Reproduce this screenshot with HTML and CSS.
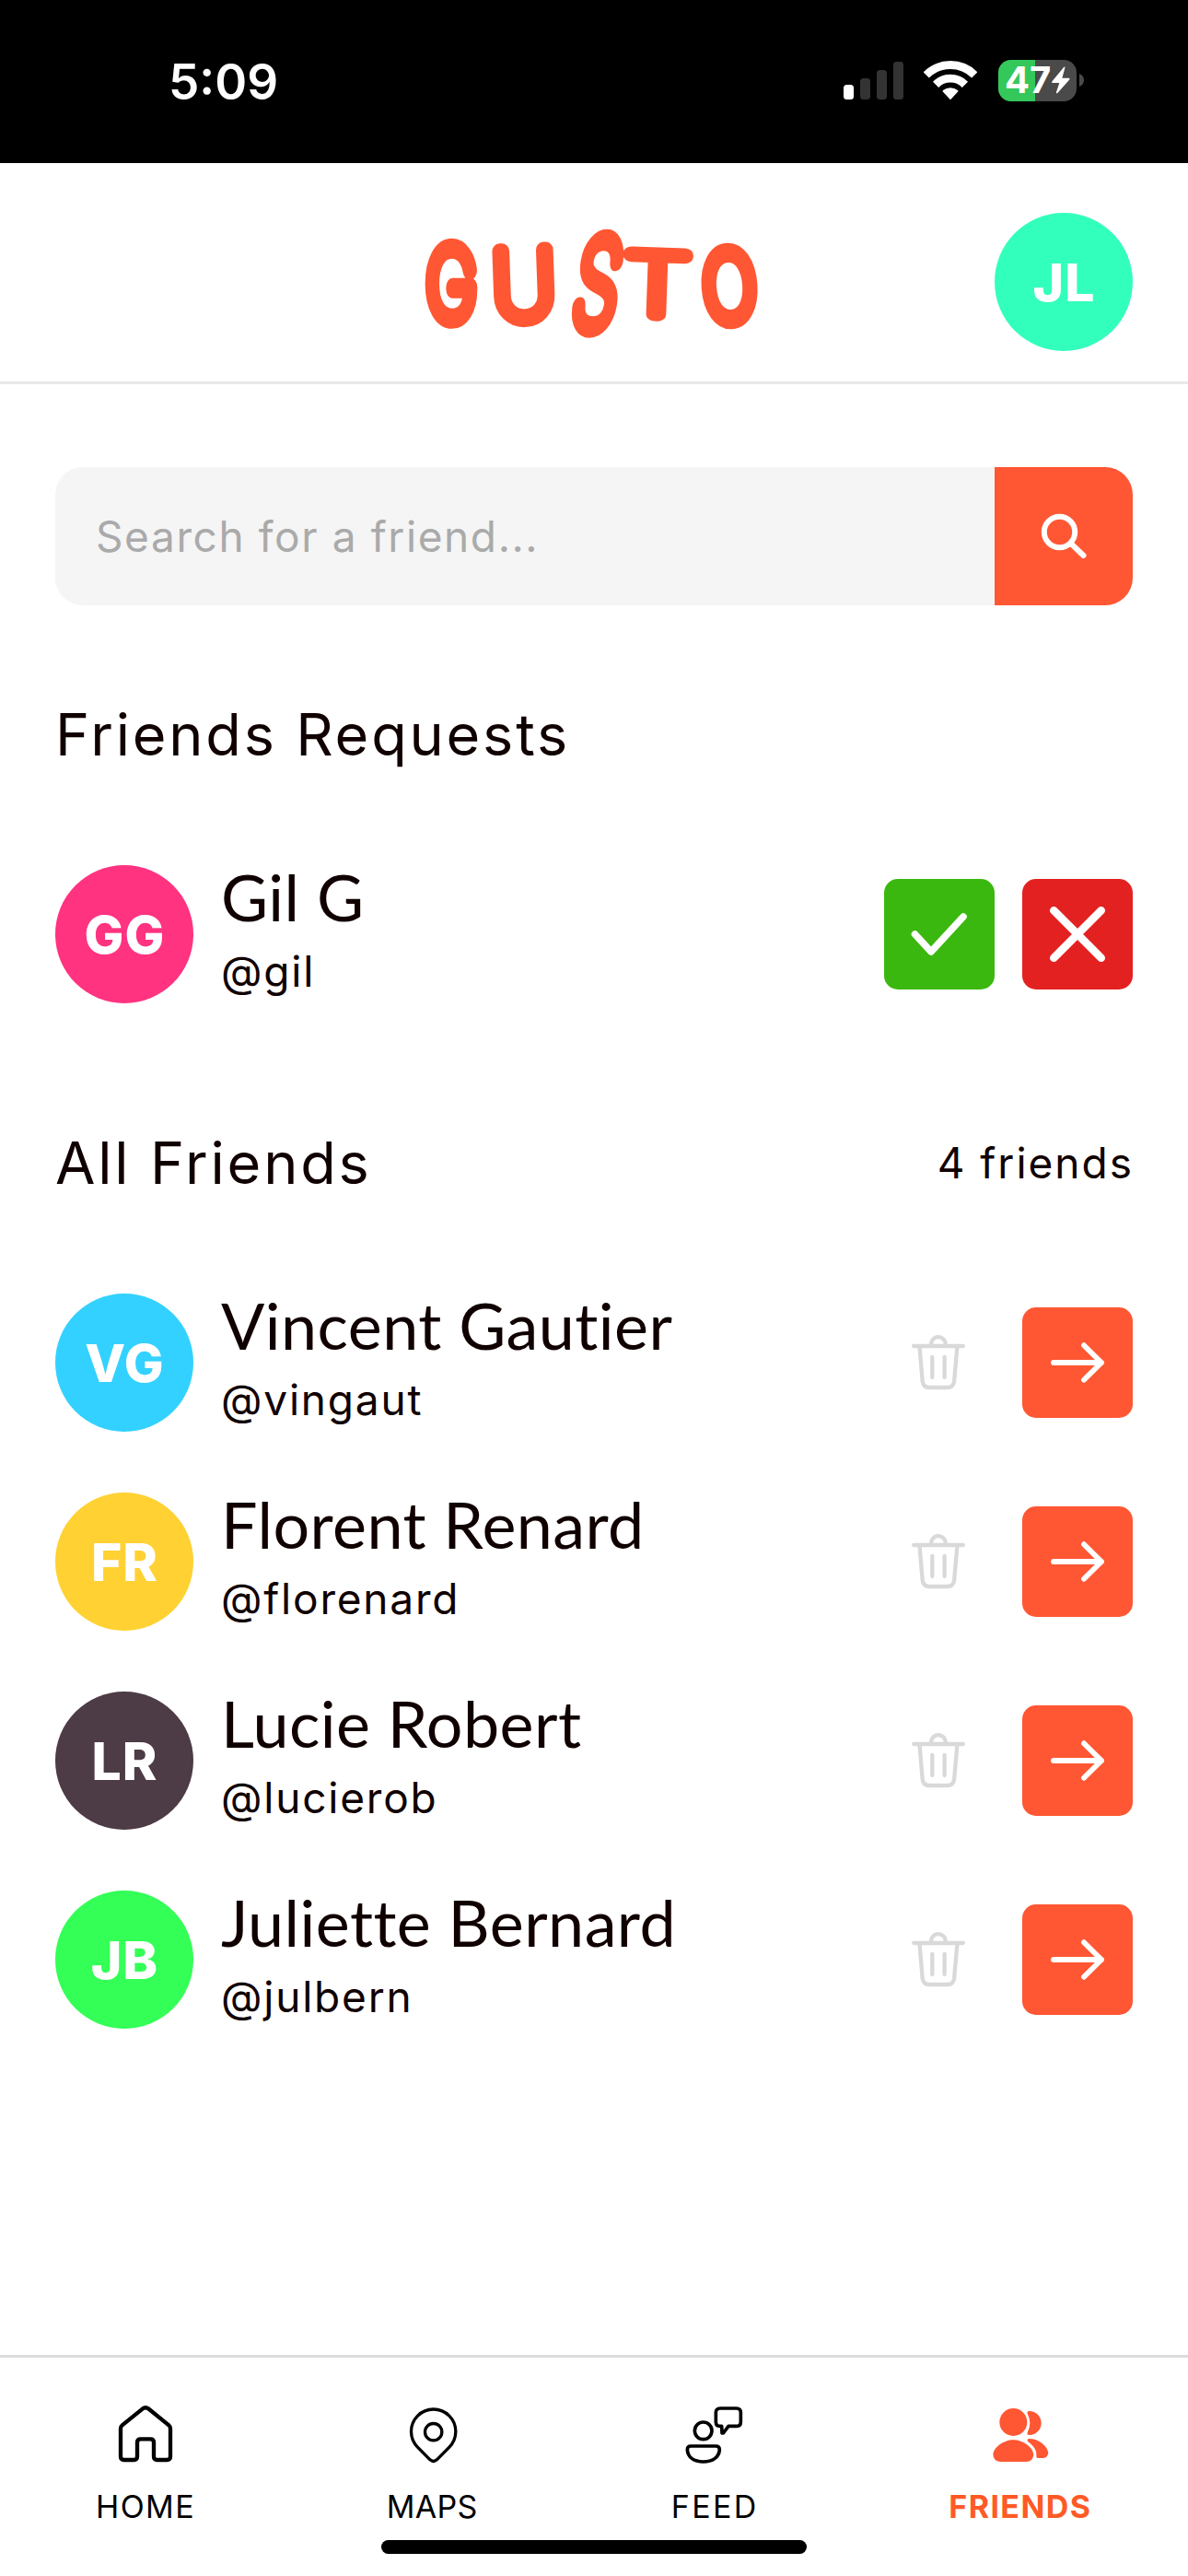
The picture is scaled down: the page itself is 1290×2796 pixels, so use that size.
FILE: index.html
```html
<!DOCTYPE html>
<html lang="en">
<head>
<meta charset="utf-8">
<title>Gusto – Friends</title>
<link rel="stylesheet" href="styles.css">
</head>
<body>
<svg class="defs" width="0" height="0" aria-hidden="true">
  <symbol id="trash" viewBox="58 67 62 64">
    <path d="M62.2 81H115.8M81 80v-1a7.9 7.9 0 0 1 15.8 0v1M68.5 82l3.2 37.2q.7 6.8 7.6 6.8h19.2q6.8 0 7.6-6.8L109.4 82M82.3 92.8V115M95.6 92.8V115" fill="none" stroke="#d9d9d9" stroke-width="4.3" stroke-linecap="round"/>
  </symbol>
  <symbol id="arrow" viewBox="0 0 120 120">
    <path d="M34 60H86M67 41.2L86 60L67 78.8" fill="none" stroke="#fff" stroke-width="5.8" stroke-linecap="round" stroke-linejoin="round"/>
  </symbol>
</svg>

<div class="screen">
  <div class="status">
    <span class="time">5:09</span>
    <div class="indicators">
      <svg class="signal" width="65" height="45" viewBox="916 64 65 45">
        <rect x="916" y="91" width="11" height="16" rx="3.5" fill="#fff"/>
        <rect x="934" y="84" width="11" height="23" rx="3.5" fill="#333"/>
        <rect x="952" y="75" width="11" height="32" rx="3.5" fill="#333"/>
        <rect x="970" y="66" width="11" height="41" rx="3.5" fill="#333"/>
      </svg>
      <svg class="wifi" width="58" height="45" viewBox="1003.5 64 58 45">
        <path d="M1006.2 80.4A37.2 37.2 0 0 1 1058.8 80.4M1016.6 90.8A22.5 22.5 0 0 1 1048.4 90.8" fill="none" stroke="#fff" stroke-width="8.8"/>
        <path d="M1032.5 107.2L1024.3 98.6Q1023.6 97.8 1024.5 97.1A13 13 0 0 1 1040.5 97.1Q1041.4 97.8 1040.7 98.6Z" fill="#fff"/>
      </svg>
      <div class="battery">
        <div class="level" style="width:47%"></div>
        <span class="percent">47</span>
        <svg class="bolt" width="20" height="30" viewBox="790 94 60 90"><path d="M830 96Q834 94 833 99L824 132H846Q851 133 847 138L809 181Q804 184 805 178L815 148H793Q788 147 792 142Z" fill="#fff"/></svg>
      </div>
      <svg class="nub" width="5" height="14" viewBox="0 0 5 14"><path d="M0 0Q5 2 5 7T0 14Z" fill="#4a4a4a"/></svg>
    </div>
  </div>

  <header class="header">
    <svg class="logo" width="368" height="132" viewBox="123 60 1104 396" role="img" aria-label="Gusto">
      <text transform="translate(211 378) scale(2.2 3.15)">G</text>
      <text transform="translate(450 376) rotate(-2) scale(2.85 3.02)">U</text>
      <text transform="translate(690 404) skewX(-9) translate(-24 0) scale(2.35 3.9)">S</text>
      <text transform="translate(877 364) rotate(2) scale(3.5 2.7)">T</text>
      <text transform="translate(1124 380) rotate(-4) scale(2.3 3)">O</text>
    </svg>
    <div class="avatar teal">JL</div>
  </header>

  <main class="content">
    <div class="search">
      <span class="placeholder">Search for a friend...</span>
      <div class="search-button">
        <svg width="150" height="150" viewBox="1080 507 150 150"><g fill="none" stroke="#fff" stroke-width="6" stroke-linecap="round"><circle cx="1150.5" cy="577.5" r="16.7"/><path d="M1162.6 589.6L1176.5 603"/></g></svg>
      </div>
    </div>

    <section class="section requests">
      <div class="section-head"><h2>Friends Requests</h2></div>
      <div class="rows">
        <div class="row">
          <div class="avatar pink">GG</div>
          <div class="person"><div class="name">Gil G</div><div class="handle">@gil</div></div>
          <div class="actions near">
            <div class="button accept"><svg width="120" height="120" viewBox="0 0 120 120"><path d="M33.5 60L51 79L86 41" fill="none" stroke="#fff" stroke-width="7.6" stroke-linecap="round" stroke-linejoin="round"/></svg></div>
            <div class="button decline"><svg width="120" height="120" viewBox="0 0 120 120"><path d="M34.3 34.3L85.7 85.7M85.7 34.3L34.3 85.7" fill="none" stroke="#fff" stroke-width="8.6" stroke-linecap="round"/></svg></div>
          </div>
        </div>
      </div>
    </section>

    <section class="section friends">
      <div class="section-head"><h2>All Friends</h2><span class="count">4 friends</span></div>
      <div class="rows">
        <div class="row">
          <div class="avatar blue">VG</div>
          <div class="person"><div class="name">Vincent Gautier</div><div class="handle">@vingaut</div></div>
          <div class="actions"><svg width="62" height="64"><use href="#trash"/></svg><div class="button"><svg width="120" height="120"><use href="#arrow"/></svg></div></div>
        </div>
        <div class="row">
          <div class="avatar yellow">FR</div>
          <div class="person"><div class="name">Florent Renard</div><div class="handle">@florenard</div></div>
          <div class="actions"><svg width="62" height="64"><use href="#trash"/></svg><div class="button"><svg width="120" height="120"><use href="#arrow"/></svg></div></div>
        </div>
        <div class="row">
          <div class="avatar plum">LR</div>
          <div class="person"><div class="name">Lucie Robert</div><div class="handle">@lucierob</div></div>
          <div class="actions"><svg width="62" height="64"><use href="#trash"/></svg><div class="button"><svg width="120" height="120"><use href="#arrow"/></svg></div></div>
        </div>
        <div class="row">
          <div class="avatar green">JB</div>
          <div class="person"><div class="name">Juliette Bernard</div><div class="handle">@julbern</div></div>
          <div class="actions"><svg width="62" height="64"><use href="#trash"/></svg><div class="button"><svg width="120" height="120"><use href="#arrow"/></svg></div></div>
        </div>
      </div>
    </section>
  </main>

  <nav class="tabs">
    <div class="tab home">
      <svg width="64" height="66" viewBox="108 42 192 198"><path d="M195 55Q204 48 213 55L280 109Q285 113 285 120V211Q285 222 274 222H242Q231 222 231 211V165Q231 154 220 154H188Q177 154 177 165V211Q177 222 166 222H134Q123 222 123 211V120Q123 113 128 109Z" fill="none" stroke="#000" stroke-width="13"/></svg>
      <span>HOME</span>
    </div>
    <div class="tab maps">
      <svg width="64" height="66" viewBox="1042 42 192 198"><g fill="none" stroke="#000" stroke-width="10"><path d="M1086 181A72.5 72.5 0 1 1 1188 181L1148 221.500Q1137 231 1126 221.500Z"/><circle cx="1137" cy="131" r="27.500"/></g></svg>
      <span>MAPS</span>
    </div>
    <div class="tab feed">
      <svg width="64" height="66" viewBox="68 42 192 198"><g fill="none" stroke="#000" stroke-width="11" stroke-linejoin="round"><circle cx="127" cy="127" r="28"/><path d="M86 177H168Q180 177 180 189C178 214 157 228 127 228S77 214 75 189Q75 177 86 177ZM182 54H235Q249 54 249 68V98Q249 112 235 112H209L192 135H188L187 112H182Q168 112 168 98V68Q168 54 182 54Z"/></g></svg>
      <span>FEED</span>
    </div>
    <div class="tab people active">
      <svg width="64" height="66" viewBox="1067 42 192 198"><g fill="#ff5733"><circle cx="1140" cy="99" r="45"/><path d="M1074 204C1076 182 1108 157 1140 157S1204 182 1206 204Q1205 226 1183 228H1097Q1075 226 1074 204ZM1186 71Q1183 63 1192 63C1214 63 1231 80 1231 102S1214 141 1192 141Q1183 141 1186 133Q1202 102 1186 71ZM1188 163Q1182 154 1192 153C1222 153 1250 176 1254 198Q1253 215 1237 216H1219Q1214 215 1215 209C1217 190 1205 175 1188 163Z"/></g></svg>
      <span>FRIENDS</span>
    </div>
  </nav>
  <div class="home-indicator"></div>
</div>
</body>
</html>
```
FILE: styles.css
```css
* { box-sizing: border-box; }
body { margin: 0; background: #fff; color: #100000; font-family: Inter, "Open Sans", sans-serif; }
svg { display: block; flex: none; }
.defs { position: absolute; }
.screen { width: 1290px; height: 2796px; display: flex; flex-direction: column; position: relative; }

.status { height: 177px; flex: none; background: #000; color: #fff; display: flex; justify-content: space-between; align-items: center; padding: 0 113px 3px 183px; }
.time { font-size: 53px; font-weight: 600; letter-spacing: 0; line-height: 60px; padding-top: 3px; }
.indicators { display: flex; align-items: center; }
.wifi { margin-left: 22px; }
.battery { margin-left: 23px; width: 85px; height: 45px; border-radius: 14px; background: #4a4a4a; display: flex; align-items: center; position: relative; padding-left: 7px; }
.level { position: absolute; left: 0; top: 0; bottom: 0; background: #34c759; border-radius: 14px 0 0 14px; }
.percent { position: relative; width: 51px; font-size: 40px; font-weight: 700; line-height: 50px; margin: -3px 0; white-space: nowrap; }
.bolt { position: relative; }
.nub { margin-left: 3px; }

.header { height: 240px; flex: none; border-bottom: 3px solid #e8e8e8; padding: 54px 60px 33px; display: grid; grid-template-columns: 1fr auto 1fr; align-items: center; }
.header .avatar { justify-self: end; }
.logo { grid-column: 2; overflow: visible; }
.logo text { font: 100 100px Inter, sans-serif; text-anchor: middle; fill: #ff5733; stroke: #ff5733; stroke-width: 17px; stroke-linejoin: round; stroke-linecap: round; vector-effect: non-scaling-stroke; }

.avatar { width: 150px; height: 150px; flex: none; border-radius: 50%; color: #fff; font-size: 57px; font-weight: 800; letter-spacing: 1px; text-indent: 1px; line-height: 152px; text-align: center; }
.teal { background: #33ffbd; }
.pink { background: #ff3380; }
.blue { background: #33d1ff; }
.yellow { background: #ffd133; }
.plum { background: #4d3b45; }
.green { background: #33ff57; }

.content { flex: 1; padding: 90px 60px 0; display: flex; flex-direction: column; }
.search { height: 150px; display: flex; align-items: center; border-radius: 30px; overflow: hidden; background: #f5f5f5; }
.placeholder { flex: 1; padding-left: 44px; color: #aaa; font-size: 46px; letter-spacing: 1.6px; }
.search-button { background: #ff5733; }

.requests { margin-top: 100px; }
.friends { margin-top: 133px; }
.section-head { height: 80px; display: flex; align-items: center; justify-content: space-between; }
h2 { margin: 0; font-size: 63px; font-weight: 400; letter-spacing: 2.8px; line-height: 80px; }
.count { font-size: 46px; letter-spacing: 2px; margin-right: -1px; }
.rows { margin-top: 102px; display: flex; flex-direction: column; gap: 66px; }
.row { height: 150px; display: flex; align-items: center; }
.person { flex: 1; align-self: flex-start; padding-left: 30px; }
.name { font-family: Lato, sans-serif; font-size: 70px; line-height: 68px; letter-spacing: .45px; }
.handle { margin-top: 17px; font-size: 46px; line-height: 60px; letter-spacing: 1.8px; }
.actions { display: flex; align-items: center; gap: 60px; }
.near { gap: 30px; }
.button { width: 120px; height: 120px; border-radius: 15px; background: #ff5733; }
.accept { background: #3bb80f; }
.decline { background: #e42121; }

.tabs { height: 240px; flex: none; border-top: 3px solid #dcdcdc; padding: 51px 106px 0 106px; display: flex; justify-content: space-between; color: #000; }
.tab { display: flex; flex-direction: column; align-items: center; gap: 25px; }
.tab span { display: block; font-size: 34px; line-height: 40px; letter-spacing: 1.4px; margin: 0 -1.4px 0 -2px; }
.tab.maps span { letter-spacing: .3px; margin-right: 1px; }
.tab.feed span { letter-spacing: 2.3px; margin-right: -2.3px; }
.active span { color: #ff5a26; font-weight: 750; }
.home-indicator { position: absolute; left: 414px; bottom: 24px; width: 462px; height: 15px; border-radius: 8px; background: #000; }
```
